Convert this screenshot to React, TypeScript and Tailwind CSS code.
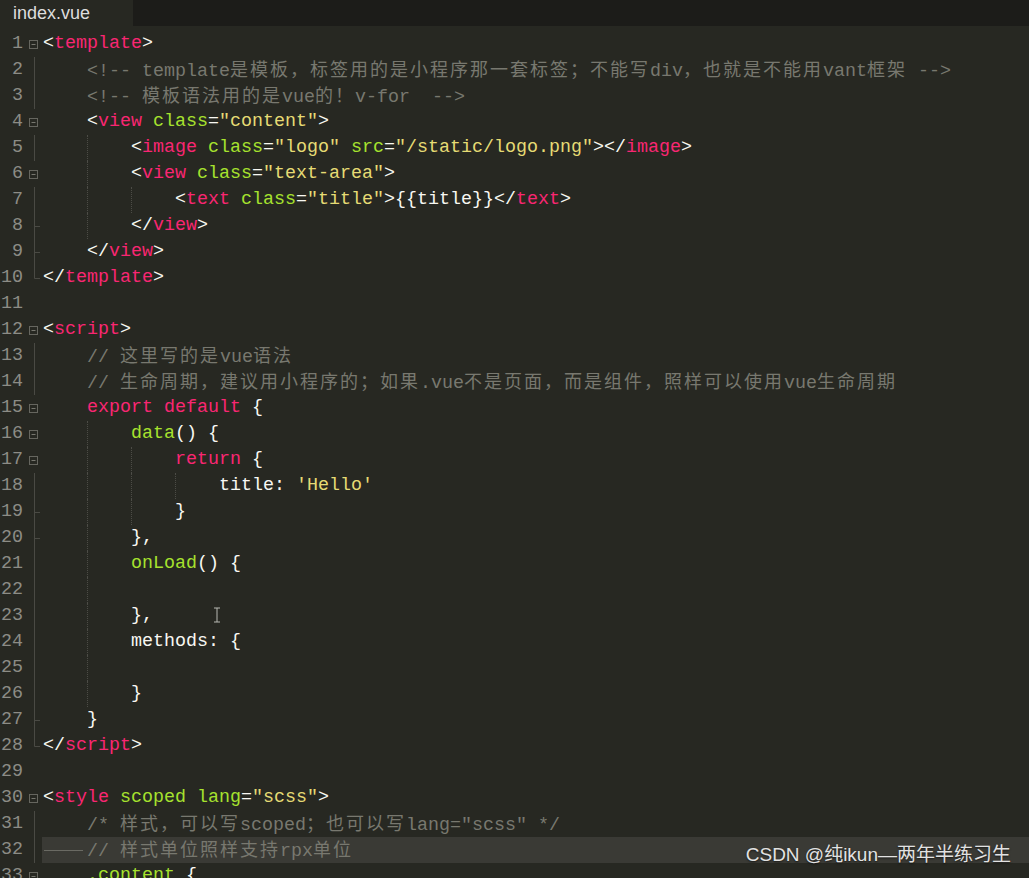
import React from "react";

type Tok = [string, string];

const P = "text-[#f8f8f2]";
const T = "text-[#f92672]";
const A = "text-[#a6e22e]";
const S = "text-[#e6db74]";
const C = "text-[#78786f]";

type Fold = "box" | "v" | "tick" | "end" | "none";

interface Linea {
    indent: number;
    toks: Tok[];
    fold: Fold;
}

const tag = (ind: string, name: string, attrs: Tok[] = [], close = false): Tok[] => [
    [P, ind + (close ? "</" : "<")],
    [T, name],
    ...attrs,
    [P, ">"],
];

const lineas: Linea[] = [
    { indent: 0, fold: "box", toks: tag("", "template") },
    { indent: 4, fold: "v", toks: [[C, "    <!-- template是模板，标签用的是小程序那一套标签；不能写div，也就是不能用vant框架 -->"]] },
    { indent: 4, fold: "v", toks: [[C, "    <!-- 模板语法用的是vue的！v-for  -->"]] },
    { indent: 4, fold: "box", toks: tag("    ", "view", [[P, " "], [A, "class"], [P, "="], [S, "\"content\""]]) },
    {
        indent: 8, fold: "v", toks: [
            ...tag("        ", "image", [[P, " "], [A, "class"], [P, "="], [S, "\"logo\""], [P, " "], [A, "src"], [P, "="], [S, "\"/static/logo.png\""]]),
            ...tag("", "image", [], true),
        ]
    },
    { indent: 8, fold: "box", toks: tag("        ", "view", [[P, " "], [A, "class"], [P, "="], [S, "\"text-area\""]]) },
    {
        indent: 12, fold: "v", toks: [
            ...tag("            ", "text", [[P, " "], [A, "class"], [P, "="], [S, "\"title\""]]),
            [P, "{{title}}"],
            ...tag("", "text", [], true),
        ]
    },
    { indent: 8, fold: "tick", toks: tag("        ", "view", [], true) },
    { indent: 4, fold: "tick", toks: tag("    ", "view", [], true) },
    { indent: 0, fold: "end", toks: tag("", "template", [], true) },
    { indent: 0, fold: "none", toks: [] },
    { indent: 0, fold: "box", toks: tag("", "script") },
    { indent: 4, fold: "v", toks: [[C, "    // 这里写的是vue语法"]] },
    { indent: 4, fold: "v", toks: [[C, "    // 生命周期，建议用小程序的；如果.vue不是页面，而是组件，照样可以使用vue生命周期"]] },
    { indent: 4, fold: "box", toks: [[T, "    export"], [P, " "], [T, "default"], [P, " {"]] },
    { indent: 8, fold: "box", toks: [[A, "        data"], [P, "() {"]] },
    { indent: 12, fold: "box", toks: [[T, "            return"], [P, " {"]] },
    { indent: 16, fold: "v", toks: [[P, "                title: "], [S, "'Hello'"]] },
    { indent: 12, fold: "tick", toks: [[P, "            }"]] },
    { indent: 8, fold: "tick", toks: [[P, "        },"]] },
    { indent: 8, fold: "v", toks: [[A, "        onLoad"], [P, "() {"]] },
    { indent: 8, fold: "v", toks: [] },
    { indent: 8, fold: "v", toks: [[P, "        },"]] },
    { indent: 8, fold: "v", toks: [[P, "        methods: {"]] },
    { indent: 8, fold: "v", toks: [] },
    { indent: 8, fold: "v", toks: [[P, "        }"]] },
    { indent: 4, fold: "tick", toks: [[P, "    }"]] },
    { indent: 0, fold: "end", toks: tag("", "script", [], true) },
    { indent: 0, fold: "none", toks: [] },
    { indent: 0, fold: "box", toks: tag("", "style", [[P, " "], [A, "scoped"], [P, " "], [A, "lang"], [P, "="], [S, "\"scss\""]]) },
    { indent: 4, fold: "v", toks: [[C, "    /* 样式，可以写scoped；也可以写lang=\"scss\" */"]] },
    { indent: 4, fold: "v", toks: [[C, "    // 样式单位照样支持rpx单位"]] },
    { indent: 4, fold: "box", toks: [[A, "    .content"], [P, " {"]] },
];

const guias = ["left-[45px]", "left-[89px]", "left-[133px]"];

const CJK = /([\u2E80-\u9FFF\u3000-\u303F\uFF00-\uFFEF]+)/;

const Texto: React.FC<{ texto: string }> = ({ texto }) => (
    <>
        {texto.split(CJK).map((parte, i) =>
            CJK.test(parte) ? (
                <span key={i} className="font-['Noto_Sans_CJK_SC',sans-serif] text-[18px] tracking-[2px]">{parte}</span>
            ) : (
                <span key={i}>{parte}</span>
            )
        )}
    </>
);

const Pliegue: React.FC<{ tipo: Fold }> = ({ tipo }) => (
    <svg width="19" height="26" className="shrink-0">
        {tipo === "box" && (
            <>
                <rect x="6.5" y="9.5" width="8" height="8" fill="none" stroke="#66665f" />
                <line x1="8.5" y1="13.5" x2="12.5" y2="13.5" stroke="#77776f" />
            </>
        )}
        {(tipo === "v" || tipo === "tick") && <line x1="11.5" y1="0" x2="11.5" y2="26" stroke="#4a4a44" />}
        {tipo === "tick" && <line x1="11.5" y1="13.5" x2="17" y2="13.5" stroke="#4a4a44" />}
        {tipo === "end" && (
            <>
                <line x1="11.5" y1="0" x2="11.5" y2="13.5" stroke="#4a4a44" />
                <line x1="11.5" y1="13.5" x2="17" y2="13.5" stroke="#4a4a44" />
            </>
        )}
    </svg>
);

const App: React.FC = () => {
    return (
        <div className="relative h-[878px] w-full overflow-hidden bg-[#272822] font-['Liberation_Mono','Noto_Sans_CJK_SC',monospace]">
            {/* barra de pestañas */}
            <div className="flex h-[26px] bg-[#1c1c19]">
                <div className="flex w-[133px] items-center bg-[#272822] pl-[13px] font-['Liberation_Sans',sans-serif] text-[18px] text-[#dddddd]">
                    index.vue
                </div>
            </div>

            <div className="pt-[5px]">
                {lineas.map((l, idx) => (
                    <div key={idx} className="flex h-[26px] items-center">
                        <div className="w-[23px] shrink-0 text-right text-[18.33px] leading-none text-[#8c8c86]">{idx + 1}</div>
                        <Pliegue tipo={l.fold} />
                        <div className={`relative flex h-full flex-1 items-center whitespace-pre pl-px text-[18.33px] ${idx === 31 ? "bg-[#3a3a35]" : ""}`}>
                            {guias.filter((_, g) => (g + 1) * 4 < l.indent).map((cls) => (
                                <div key={cls} className={`absolute top-0 bottom-0 ${cls} border-l border-dotted border-[#4c4c46]`}></div>
                            ))}
                            {idx === 31 && <div className="absolute top-[13px] left-[2px] h-px w-[39px] bg-[#6a6a63]"></div>}
                            {idx === 22 && (
                                <svg width="8" height="16" className="absolute top-[4px] left-[171px]">
                                    <path d="M1 1h6M4 1v14M1 15h6" stroke="#b8b8b2" strokeWidth="1" fill="none" />
                                </svg>
                            )}
                            {l.toks.map(([cls, txt], i) => (
                                <span key={i} className={cls}>
                                    <Texto texto={txt} />
                                </span>
                            ))}
                        </div>
                    </div>
                ))}
            </div>

            {/* marca de agua */}
            <div className="absolute top-[845px] right-[18px] font-['Liberation_Sans','Noto_Sans_CJK_SC',sans-serif] text-[19px] leading-none text-[#e2e2e2] [text-shadow:0_1px_2px_rgba(0,0,0,0.6)]">
                CSDN @纯ikun—两年半练习生
            </div>
        </div>
    );
};

export default App;
